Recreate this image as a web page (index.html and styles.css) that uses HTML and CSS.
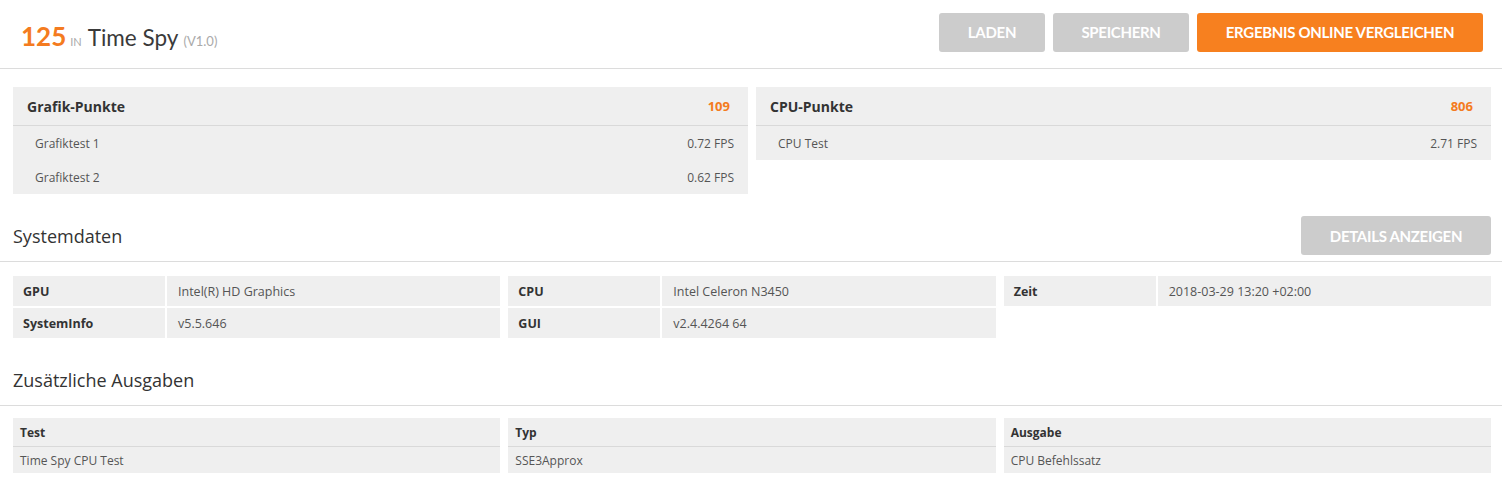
FILE: index.html
```html
<!DOCTYPE html>
<html lang="de">
<head>
    <meta charset="UTF-8">
    <title>Time Spy Ergebnis</title>
    <link rel="stylesheet" href="styles.css">
</head>
<body>
    <div class="top-bar">
        <h1 class="result-title">
            <span class="score">125</span>
            <span class="in">IN</span>
            <span class="test-name">Time Spy</span>
            <span class="version">(V1.0)</span>
        </h1>
        <div class="actions">
            <button class="btn btn-grey">LADEN</button>
            <button class="btn btn-grey">SPEICHERN</button>
            <button class="btn btn-orange">ERGEBNIS ONLINE VERGLEICHEN</button>
        </div>
    </div>

    <div class="score-cards">
        <div class="score-card">
            <div class="card-head">
                <span>Grafik-Punkte</span>
                <span class="points">109</span>
            </div>
            <div class="card-row"><span>Grafiktest 1</span><span>0.72 FPS</span></div>
            <div class="card-row"><span>Grafiktest 2</span><span>0.62 FPS</span></div>
        </div>
        <div class="score-card">
            <div class="card-head">
                <span>CPU-Punkte</span>
                <span class="points">806</span>
            </div>
            <div class="card-row"><span>CPU Test</span><span>2.71 FPS</span></div>
        </div>
    </div>

    <div class="section-head">
        <h2>Systemdaten</h2>
        <button class="btn btn-grey btn-details">DETAILS ANZEIGEN</button>
    </div>
    <div class="info-grid">
        <div class="info-group">
            <div class="info-label">GPU</div><div class="info-value">Intel(R) HD Graphics</div>
            <div class="info-label">SystemInfo</div><div class="info-value">v5.5.646</div>
        </div>
        <div class="info-group">
            <div class="info-label">CPU</div><div class="info-value">Intel Celeron N3450</div>
            <div class="info-label">GUI</div><div class="info-value">v2.4.4264 64</div>
        </div>
        <div class="info-group">
            <div class="info-label">Zeit</div><div class="info-value">2018-03-29 13:20 +02:00</div>
        </div>
    </div>

    <div class="section-head section-plain">
        <h2>Zusätzliche Ausgaben</h2>
    </div>
    <div class="extra-grid">
        <div class="extra-col">
            <div class="extra-head">Test</div>
            <div class="extra-cell">Time Spy CPU Test</div>
        </div>
        <div class="extra-col">
            <div class="extra-head">Typ</div>
            <div class="extra-cell">SSE3Approx</div>
        </div>
        <div class="extra-col">
            <div class="extra-head">Ausgabe</div>
            <div class="extra-cell">CPU Befehlssatz</div>
        </div>
    </div>
</body>
</html>
```

FILE: styles.css
```css
body {
    margin: 0;
    font-family: "Open Sans", Arial, sans-serif;
    color: #333;
    background: #fff;
}
.top-bar {
    display: flex;
    justify-content: space-between;
    align-items: center;
    height: 69px;
    padding: 0 19px 0 21px;
    border-bottom: 1px solid #dcdcdc;
    box-sizing: border-box;
}
.result-title {
    margin: 4px 0 0;
    font-family: Lato, "Open Sans", sans-serif;
    font-weight: normal;
    display: flex;
    align-items: baseline;
}
.score {
    color: #f47b20;
    font-size: 26px;
    font-weight: bold;
}
.in {
    color: #aaa;
    font-size: 11px;
    margin: 0 6px 0 4px;
}
.test-name {
    color: #3a3a3a;
    font-size: 22.5px;
}
.version {
    color: #aaa;
    font-size: 13px;
    margin-left: 5px;
}
.actions {
    display: flex;
    gap: 8px;
    margin-top: -4px;
}
.btn {
    border: none;
    border-radius: 3px;
    height: 39px;
    color: #fff;
    font-family: Lato, "Open Sans", sans-serif;
    font-weight: bold;
    font-size: 15px;
    letter-spacing: -0.3px;
    cursor: pointer;
}
.btn-grey {
    background: #cccccc;
    padding: 0;
}
.btn-orange {
    background: #f7801f;
    padding: 0;
    width: 286px;
}
.actions .btn-grey:first-child {
    width: 106px;
}
.actions .btn-grey:nth-child(2) {
    width: 136px;
}
.score-cards {
    display: flex;
    align-items: flex-start;
    gap: 8px;
    padding: 18px 11px 0 13px;
}
.score-card {
    flex: 1;
    background: #efefef;
}
.card-head {
    display: flex;
    justify-content: space-between;
    align-items: center;
    height: 38px;
    padding: 0 18px 0 14px;
    border-bottom: 1px solid #d9d9d9;
    font-size: 14px;
    font-weight: bold;
    color: #333;
}
.points {
    color: #f47b20;
    font-size: 13px;
}
.card-row {
    display: flex;
    justify-content: space-between;
    align-items: center;
    height: 34px;
    padding: 0 14px 0 22px;
    font-size: 12px;
    color: #555;
}
.section-head {
    display: flex;
    justify-content: space-between;
    align-items: center;
    height: 67px;
    padding: 0 11px 0 13px;
    border-bottom: 1px solid #dcdcdc;
}
.section-head h2 {
    margin: 17px 0 0;
    font-size: 18px;
    font-weight: 500;
    color: #333;
}
.btn-details {
    width: 190px;
    margin-top: 16px;
}
.section-plain h2 {
    margin-top: 16px;
}
.info-grid {
    display: flex;
    gap: 8px;
    padding: 14px 11px 0 13px;
    align-items: flex-start;
}
.info-group {
    flex: 1;
    display: grid;
    grid-template-columns: 152px 1fr;
    gap: 2px;
    font-size: 12.5px;
}
.info-label,
.info-value {
    background: #efefef;
    height: 30px;
    display: flex;
    align-items: center;
}
.info-label {
    padding-left: 10px;
    font-weight: bold;
    color: #333;
}
.info-value {
    padding-left: 11px;
    color: #555;
}
.extra-grid {
    display: flex;
    gap: 8px;
    padding: 12px 11px 0 13px;
}
.extra-col {
    flex: 1;
    background: #efefef;
    font-size: 12px;
}
.extra-head {
    height: 28px;
    display: flex;
    align-items: center;
    padding-left: 7px;
    font-weight: bold;
    color: #333;
    border-bottom: 1px solid #d9d9d9;
}
.extra-cell {
    height: 26px;
    display: flex;
    align-items: center;
    padding-left: 7px;
    color: #555;
}
```
